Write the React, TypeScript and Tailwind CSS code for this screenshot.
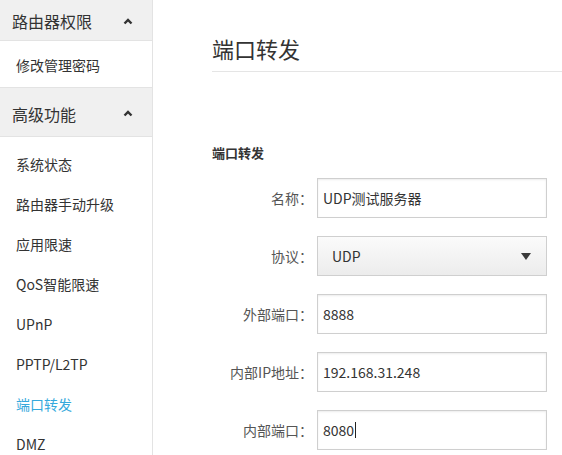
const font = { fontFamily: '"Microsoft YaHei", "Noto Sans CJK SC", sans-serif' }

function ChevronUp() {
    return (
        <svg width="10" height="7" viewBox="0 0 10 7" className="text-[#333]">
            <polyline points="1.5,5.5 5,2 8.5,5.5" fill="none" stroke="currentColor" strokeWidth="2.4" />
        </svg>
    )
}

const menuItems = ['系统状态', '路由器手动升级', '应用限速', 'QoS智能限速', 'UPnP', 'PPTP/L2TP', '端口转发', 'DMZ']

const fields = [
    { label: '名称：', value: 'UDP测试服务器' },
    { label: '协议：', value: 'UDP', select: true },
    { label: '外部端口：', value: '8888' },
    { label: '内部IP地址：', value: '192.168.31.248' },
    { label: '内部端口：', value: '8080', caret: true },
]

export default function App() {
    return (
        <div className="flex h-[455px] w-[562px] overflow-hidden bg-white text-[#333]" style={font}>
            <aside className="w-[153px] shrink-0 border-r border-[#e3e3e3]">
                <div className="flex h-[41px] items-center justify-between border-b border-[#e3e3e3] bg-[#f0f0f0] pl-[12px] pr-[19px] pt-[2px]">
                    <span className="text-[16px] leading-none">路由器权限</span>
                    <ChevronUp />
                </div>
                <div className="flex h-[47px] items-center border-b border-[#e3e3e3] pl-[16px] pt-[3px] text-[14px]">
                    修改管理密码
                </div>
                <div className="flex h-[49px] items-center justify-between border-b border-[#e3e3e3] bg-[#f0f0f0] pl-[12px] pr-[19px] pt-[3px]">
                    <span className="text-[16px] leading-none">高级功能</span>
                    <ChevronUp />
                </div>
                <ul className="pt-[7px]">
                    {menuItems.map((item) => (
                        <li
                            key={item}
                            className={`flex h-10 items-center pl-[16px] text-[14px] ${item === '端口转发' ? 'text-[#35a9dc]' : 'text-[#333]'}`}
                        >
                            {item}
                        </li>
                    ))}
                </ul>
            </aside>

            <main className="flex-1 pl-[59px] pt-[33px]">
                <h1 className="border-b border-[#e5e5e5] pb-[8px] text-[22px] font-normal leading-[30px] text-[#333]">
                    端口转发
                </h1>
                <h2 className="mt-[71px] text-[13px] font-bold leading-[20px] text-[#333]">端口转发</h2>
                <div className="mt-[15px] flex flex-col gap-[18px]">
                    {fields.map((f) => (
                        <div key={f.label} className="flex items-center">
                            <label className="w-[101px] text-right text-[14px] text-[#555]">{f.label}</label>
                            {f.select ? (
                                <div className="ml-[4px] flex h-[40px] w-[230px] items-center justify-between border border-[#cfcfcf] bg-gradient-to-b from-[#fbfbfb] to-[#ececec] pl-[14px] pr-[15px] text-[14px] text-[#333]">
                                    <span>{f.value}</span>
                                    <svg width="10" height="7" viewBox="0 0 10 7">
                                        <polygon points="0,0 10,0 5,7" fill="#3a3a3a" />
                                    </svg>
                                </div>
                            ) : (
                                <div className="ml-[4px] flex h-[40px] w-[230px] items-center border border-[#cfcfcf] pl-[5px] text-[14px] text-[#333] shadow-[inset_0_1px_2px_rgba(0,0,0,0.08)]">
                                    <span>{f.value}</span>
                                    {f.caret && <span className="ml-px inline-block h-[16px] w-px bg-[#222]" />}
                                </div>
                            )}
                        </div>
                    ))}
                </div>
            </main>
        </div>
    )
}
